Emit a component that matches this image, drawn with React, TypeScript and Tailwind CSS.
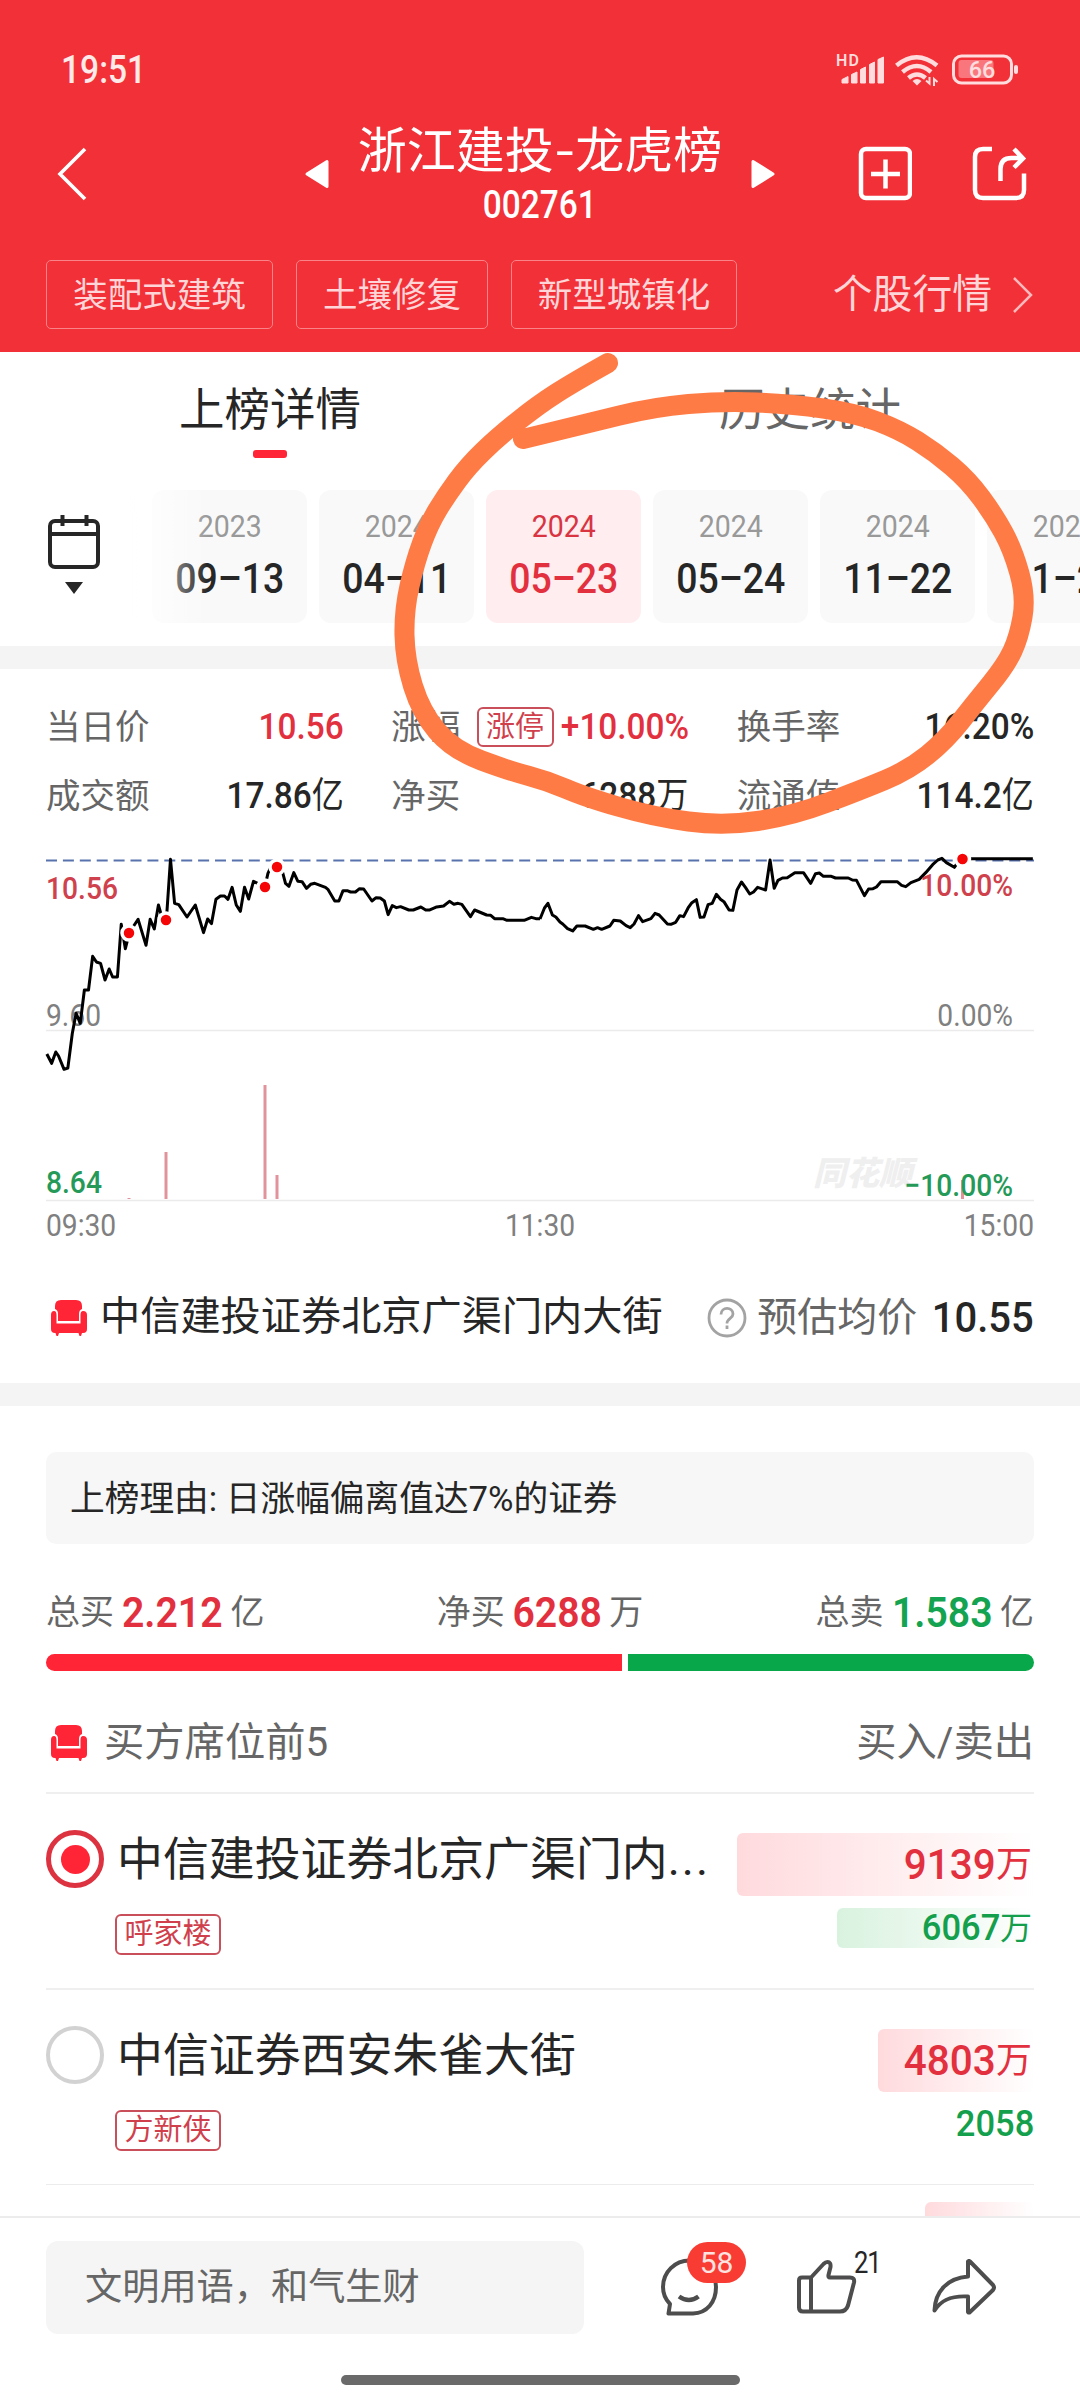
import type { ReactNode } from "react";

type Point = [number, number];

const dates = [
  { year: "2023", day: "09-13" },
  { year: "2024", day: "04-11" },
  { year: "2024", day: "05-23", active: true },
  { year: "2024", day: "05-24" },
  { year: "2024", day: "11-22" },
  { year: "2024", day: "11-25" },
];

// morning session, then afternoon session
const morning =
  "136,642 150,670 162,636 170,648 186,688 197,684 210,580 221,520 233,550 245,450 257,450 269,349 280,366 292,370 305,420 317,387 327,411 341,411 352,253 364,326 375,280 390,255 401,238 424,316 436,238 448,267 460,195 467,220 483,241 495,58 507,190 519,194 543,231 567,195 591,278 603,237 614,251 627,178 640,168 652,168 662,178 674,142 686,195 698,214 710,142 722,177 736,124 748,130 769,141 778,100 786,82 805,82 820,95 829,130 839,139 853,98 865,124 877,125 890,145 902,133 914,130 945,142 952,148 972,183 984,183 996,152 1008,152 1018,156 1032,156 1044,146 1056,147 1080,183 1092,173 1104,174 1116,183 1127,224 1139,197 1151,203 1163,200 1187,210 1200,210 1222,201 1236,210 1248,210 1268,201 1288,198 1305,184 1318,193 1330,190 1341,193 1366,230 1378,210 1413,225 1425,226 1436,236 1460,236 1472,241 1522,241 1543,232 1556,236 1568,236";
const afternoon =
  "0,237 13,204 23,190 36,225 46,231 58,246 66,252 80,266 95,273 107,258 131,258 155,268 167,263 179,268 203,258 214,241 233,243 250,257 262,263 273,252 286,227 298,245 322,236 334,220 346,225 370,252 380,253 394,247 406,227 417,230 430,204 441,188 454,179 465,232 476,231 488,194 500,190 512,163 524,178 534,185 549,210 560,211 572,150 585,126 597,143 609,162 620,156 632,142 655,150 668,60 680,145 691,121 704,114 718,113 740,98 765,98 786,130 800,101 811,99 823,109 846,109 858,114 895,114 907,120 919,121 942,167 954,147 967,146 977,141 990,125 1037,125 1050,136 1062,140 1077,128 1101,118 1120,98 1140,74 1155,60 1167,55 1180,68 1203,82 1215,65 1227,56 1250,56 1431,56";

const trades: Point[] = [[129, 933], [166, 920], [265, 887], [277, 867], [962.5, 859]];
const volumes: Point[] = [[129, 1198], [166, 1152], [265, 1085], [277, 1175], [962.5, 1180]];

const marker: Point[] = [
  [608, 363], [574, 382], [538, 405], [498, 437], [468, 466], [446, 496], [429, 524], [415, 562], [404, 610], [405, 660],
  [421, 712], [453, 750], [510, 771], [548, 781], [585, 797], [654, 817], [723, 826], [792, 816], [861, 790], [909, 770],
  [946, 740], [975, 703], [1006, 665], [1019, 637], [1026, 597], [1013, 550], [994, 515], [968, 480], [935, 452], [900, 430],
  [855, 413], [792, 404], [723, 401], [654, 407], [585, 424], [523, 439],
];

function smooth(points: Point[]) {
  let d = `M${points[0][0]} ${points[0][1]}`;
  for (let i = 1; i < points.length - 1; i++) {
    const [x, y] = points[i];
    const [nx, ny] = points[i + 1];
    d += ` Q${x} ${y} ${(x + nx) / 2} ${(y + ny) / 2}`;
  }
  const last = points[points.length - 1];
  return `${d} L${last[0]} ${last[1]}`;
}

export default function App() {
  return (
    <div className="relative w-[1080px] h-[2400px] overflow-hidden bg-white text-[#262626] leading-none whitespace-nowrap font-['Roboto','Noto_Sans_CJK_SC',sans-serif]">
      <Header />
      <Tabs />
      <DateStrip />
      <div className="h-[23px] bg-[#f4f4f4]" />
      <Stats />
      <Chart />

      {/* Selected seat */}
      <div className="h-[143px] pt-[12px] pl-[49px] pr-[46px] flex items-center">
        <SeatIcon />
        <span className="ml-[11px] text-[40.200px]">中信建投证券北京广渠门内大街</span>
        <svg className="ml-auto" width="40" height="40" viewBox="0 0 40 40" fill="none" stroke="#a3a3a3" strokeWidth="2.8">
          <circle cx="20" cy="20" r="18" />
          <path d="M14 16.5c0-8 12-8 12-.5 0 4.500-6 4.500-6 9.500" />
          <path d="M20 27.500v3.500" />
        </svg>
        <span className="ml-[10px] text-[40px] text-[#666]">预估均价</span>
        <span className="ml-[7px] text-[43px] font-medium origin-right scale-x-[0.93]">10.55</span>
      </div>
      <div className="h-[23px] bg-[#f4f4f4]" />

      {/* Reason and totals */}
      <section className="px-[46px] pt-[46px]">
        <div className="h-[92px] rounded-[10px] bg-[#f7f7f7] px-6 pt-[2px] flex items-center text-[34.700px]">
          上榜理由: 日涨幅偏离值达7%的证券
        </div>
        <div className="h-[110px] pt-[26px] flex items-center justify-between">
          <Total label="总买" value="2.212" unit="亿" color="text-[#e2303f]" />
          <Total label="净买" value="6288" unit="万" color="text-[#e2303f]" />
          <Total label="总卖" value="1.583" unit="亿" color="text-[#14a350]" />
        </div>
        <div className="flex h-[17px] gap-[6px]">
          <div className="w-[576px] rounded-l-full bg-[#ff2436]" />
          <div className="flex-1 rounded-r-full bg-[#08a84a]" />
        </div>
        <div className="h-[121px] pt-[23px] pl-[3px] flex items-center text-[40.300px] text-[#666]">
          <SeatIcon />
          <span className="ml-[15px]">买方席位前5</span>
          <span className="ml-auto">买入/卖出</span>
        </div>
        <Seat name="中信建投证券北京广渠门内" more tag="呼家楼" buy="9139" sell="6067" sellUnit="万" checked buyBar="w-[297px]" sellBar="w-[197px]" />
        <Seat name="中信证券西安朱雀大街" tag="方新侠" buy="4803" sell="2058" buyBar="w-[156px]" />
        <div className="h-8 overflow-hidden border-t border-[#ececec] pt-[17px]">
          <div className="ml-auto h-[63px] w-[109px] rounded-l-md bg-linear-to-r from-[#ffdadd] to-white" />
        </div>
      </section>

      <Footer />

      {/* Hand-drawn circle */}
      <svg className="absolute inset-0 pointer-events-none" width="1080" height="2400" fill="none">
        <path d={smooth(marker)} stroke="#ff7b45" strokeWidth="20" strokeLinecap="round" strokeLinejoin="round" />
      </svg>
    </div>
  );
}

function Header() {
  return (
    <header className="h-[352px] bg-[#f23037] text-white">
      <div className="h-[140px] pl-[61px] pr-[61px] flex items-center justify-between">
        <span className="text-[39px] font-medium text-[#ffeaea] origin-left scale-x-[0.86]">19:51</span>
        <svg width="183" height="34" viewBox="837 53 183 34" fill="#ffdcdd">
          <text x="837" y="66" fontSize="16" fontWeight="600" textLength="23">HD</text>
          <path d="M843 83v-3.500l6-3v6.500zM852.500 83v-8.500l5.500-2.500v11zM861.500 83v-13.500l5-2.500v16zM870.500 83v-18.500l5-2.500v21zM879 83v-23.500l5.500-2.500v26z" stroke="#ffdcdd" strokeWidth="1" strokeLinejoin="round" />
          <g fill="none" stroke="#ffdcdd" strokeWidth="4.500">
            <path d="M897.500 65.500q20-16.500 40.500 0" />
            <path d="M903.500 72q14.500-12 28.500 0" />
            <path d="M909.500 78q8.500-7 17 0" />
          </g>
          <path d="M913.500 81q4.500-4 9 0l-4.500 4.500z" />
          <path d="M927 80.500l3.500 3V77M935 86v-7l3.500 3" fill="none" stroke="#ffdcdd" strokeWidth="2" />
          <rect x="954.500" y="56" width="58" height="27" rx="8" fill="none" stroke="#ffdcdd" strokeWidth="3" />
          <rect x="959.500" y="60" width="35" height="18" rx="3" fill="#f9777c" />
          <rect x="1015" y="65" width="4" height="9" rx="2" />
          <text x="983" y="78" fontSize="23.500" fontWeight="500" textAnchor="middle">66</text>
        </svg>
      </div>

      <div className="h-[120px] px-[54px] flex items-start">
        <svg className="mt-[6px]" width="36" height="56" viewBox="0 0 36 56" fill="none" stroke="white" strokeWidth="3.600">
          <path d="M31 3L6 28l25 25" />
        </svg>
        <svg className="mt-[19px] ml-[214px]" width="26" height="30" viewBox="0 0 26 30" fill="white" stroke="white" strokeWidth="3" strokeLinejoin="round">
          <path d="M23 2.500v25L3 15z" />
        </svg>
        <div className="w-[420px] flex flex-col items-center">
          <h1 className="text-[49px] leading-[60px] -mt-[18px] text-center">
            浙江建投<span className="mx-[4px] inline-block scale-x-[1.3]">-</span>龙虎榜
          </h1>
          <span className="text-[38px] leading-[44px] font-medium mt-[1px] scale-x-[0.88]">002761</span>
        </div>
        <svg className="mt-[19px]" width="26" height="30" viewBox="0 0 26 30" fill="white" stroke="white" strokeWidth="3" strokeLinejoin="round">
          <path d="M3 2.500v25L23 15z" />
        </svg>
        <svg className="mt-[6px] ml-auto" width="56" height="56" viewBox="0 0 56 56" fill="none" stroke="white" strokeWidth="4.500">
          <rect x="5" y="3" width="49" height="49" rx="5" />
          <path d="M29.500 13.500v29M15 28h29" />
        </svg>
        <svg className="mt-[6px] ml-[59px] -mr-px" width="56" height="56" viewBox="0 0 56 56" fill="none" stroke="white" strokeWidth="4.500">
          <path d="M21 3h-9q-8 0-8 8v33q0 8 8 8h33q8 0 8-8V27.500" />
          <path d="M29.500 35V23q0-11 11-11h10M43 3l9 9.500-9 9" />
        </svg>
      </div>

      <div className="h-[69px] px-[46px] flex items-center gap-[23px] text-[#ffd5d7]">
        <Chip width="w-[227px]">装配式建筑</Chip>
        <Chip width="w-[192px]">土壤修复</Chip>
        <Chip width="w-[226px]">新型城镇化</Chip>
        <span className="ml-auto text-[39.800px]">个股行情</span>
        <svg className="-ml-[3px]" width="22" height="38" viewBox="0 0 22 38" fill="none" stroke="#ffb9bc" strokeWidth="2.500">
          <path d="M2 2l17 17L2 36" />
        </svg>
      </div>
    </header>
  );
}

function Chip({ width, children }: { width: string; children: ReactNode }) {
  return (
    <span className={`${width} h-[69px] pt-px border border-[#f98388] rounded-[5px] flex items-center justify-center text-[34.500px]`}>
      {children}
    </span>
  );
}

function Tabs() {
  return (
    <nav className="h-[138px] pt-[29px] flex text-[45.500px] leading-[60px]">
      <div className="w-1/2 flex flex-col items-center">
        <span>上榜详情</span>
        <div className="mt-[9px] h-2 w-[34px] rounded-[3px] bg-[#ff2436]" />
      </div>
      <div className="w-1/2 text-center text-[#666]">历史统计</div>
    </nav>
  );
}

function DateStrip() {
  return (
    <div className="h-[156px] pl-[46px] flex overflow-hidden">
      <div className="w-[57px] pt-[24px] flex flex-col items-center">
        <svg width="56" height="82" viewBox="0 0 56 82" fill="none" stroke="#262626" strokeWidth="4">
          <rect x="4" y="7" width="48" height="46" rx="5" />
          <path d="M4 20h48M16.500 1v11M40.500 1v11" />
          <path d="M19 68h18l-9 12z" fill="#262626" stroke="none" />
        </svg>
      </div>
      <div className="relative ml-[26px] flex shrink-0 gap-3">
        <div className="h-[133px] w-3 rounded-r-[12px] bg-[#fcfcfc]" />
        {dates.map((d, i) => (
          <div
            key={i}
            className={`h-[133px] w-[155px] shrink-0 rounded-[12px] flex flex-col items-center ${
              d.active ? "bg-[#ffedef] text-[#e2303f]" : "bg-[#f9f9f9]"
            }`}
          >
            <span className={`mt-[20px] text-[31px] leading-[34px] scale-x-[0.92] ${d.active ? "text-[#d83442]" : "text-[#999]"}`}>
              {d.year}
            </span>
            <span className="mt-[10px] text-[43px] leading-[48px] font-medium scale-x-[0.87]">{d.day.replace("-", "–")}</span>
          </div>
        ))}
        <div className="absolute left-0 top-0 h-[133px] w-[80px] bg-linear-to-r from-white to-white/0" />
      </div>
    </div>
  );
}

function Stats() {
  return (
    <div className="h-[160px] pt-[23px] px-[46px] grid grid-cols-3 gap-x-[48px]">
      <Stat label="当日价"><span className="text-[#e2303f]">10.56</span></Stat>
      <Stat
        label="涨幅"
        badge={
          <span className="ml-auto mr-[-9px] h-[40px] w-[77px] border-2 border-[#c9505a] rounded-md flex items-center justify-center text-[29px] text-[#d0404c]">
            涨停
          </span>
        }
      >
        <span className="text-[#e2303f]">+10.00%</span>
      </Stat>
      <Stat label="换手率">16.20%</Stat>
      <Stat label="成交额">17.86<Unit /></Stat>
      <Stat label="净买">6288<Unit text="万" /></Stat>
      <Stat label="流通值">114.2<Unit /></Stat>
    </div>
  );
}

function Unit({ text = "亿" }: { text?: string }) {
  return <span className="text-[36px] font-normal">{text}</span>;
}

function Stat({ label, badge, children }: { label: string; badge?: ReactNode; children: ReactNode }) {
  return (
    <div className="h-[69px] pt-px flex items-center justify-between">
      <span className="text-[34.500px] text-[#666]">{label}</span>
      {badge}
      <span className="flex items-center text-[37.500px] font-medium origin-right scale-x-[0.89]">{children}</span>
    </div>
  );
}

function Chart() {
  return (
    <svg className="block overflow-visible" width="1080" height="411" viewBox="0 829 1080 411">
      <text x="813" y="1185" fontSize="33" fontWeight="900" fontStyle="italic" fill="#efefef">同花顺</text>
      <path d="M46 1030.500H1034M46 1200.500H1034" stroke="#ebebeb" strokeWidth="1.500" />
      <path d="M46 860.500H1034" stroke="#5872ae" strokeWidth="1.800" strokeDasharray="11 5.900" />
      <g fontSize="31">
        <Tick x={46} y={1026} color="#808080">9.60</Tick>
        <g fill="none" stroke="black" strokeWidth="3" strokeLinejoin="round">
          <polyline points={morning} transform="translate(0 840) scale(0.3444 0.3333)" vectorEffect="non-scaling-stroke" />
          <polyline points={afternoon} transform="translate(540 840) scale(0.3444 0.3333)" vectorEffect="non-scaling-stroke" />
        </g>
        {volumes.map(([x, y]) => (
          <path key={x} d={`M${x} ${y}V1199`} stroke="#e0939a" strokeWidth="3" />
        ))}
        {trades.map(([x, y]) => (
          <circle key={x} cx={x} cy={y} r="7" fill="#f50505" stroke="white" strokeWidth="3.500" />
        ))}
        <g fontWeight="500">
          <Tick x={46} y={899} color="#cf414c">10.56</Tick>
          <Tick x={46} y={1193} color="#259a58">8.64</Tick>
          <Tick x={1013} y={896} color="#cf414c" anchor="end">10.00%</Tick>
          <Tick x={1013} y={1196} color="#259a58" anchor="end">−10.00%</Tick>
        </g>
        <Tick x={1013} y={1026} color="#808080" anchor="end">0.00%</Tick>
        <Tick x={46} y={1236} color="#808080">09:30</Tick>
        <Tick x={540} y={1236} color="#808080" anchor="middle">11:30</Tick>
        <Tick x={1034} y={1236} color="#808080" anchor="end">15:00</Tick>
      </g>
    </svg>
  );
}

function Tick({ x, y, color, anchor = "start", children }: { x: number; y: number; color: string; anchor?: "start" | "middle" | "end"; children: ReactNode }) {
  return (
    <text transform={`translate(${x} ${y}) scale(0.91 1)`} fill={color} textAnchor={anchor}>
      {children}
    </text>
  );
}

function Total({ label, value, unit, color }: { label: string; value: string; unit: string; color: string }) {
  return (
    <div className="flex items-center text-[34px] text-[#666]">
      {label}
      <span className={`mx-[3px] text-[43px] font-semibold scale-x-[0.91] ${color}`}>{value}</span>
      {unit}
    </div>
  );
}

type SeatProps = {
  name: string;
  more?: boolean;
  tag: string;
  buy: string;
  sell: string;
  sellUnit?: string;
  checked?: boolean;
  buyBar: string;
  sellBar?: string;
};

function Seat({ name, more, tag, buy, sell, sellUnit, checked, buyBar, sellBar }: SeatProps) {
  return (
    <div className="h-[196px] border-t-2 border-[#efefef] flex">
      <div
        className={`mt-[36px] h-[58px] w-[58px] shrink-0 rounded-full flex items-center justify-center ${
          checked ? "border-[5px] border-[#dd3240]" : "border-[4px] border-[#d2d2d2]"
        }`}
      >
        {checked && <div className="h-[29px] w-[29px] rounded-full bg-[#ff2436]" />}
      </div>
      <div className="ml-[11px] pt-[35px]">
        <div className="ml-[2px] text-[45.900px] leading-[60px]">
          {name}{more && <span className="tracking-[2px]">...</span>}
        </div>
        <span className="mt-[25px] h-[41px] w-[106px] border-2 border-[#c9505a] rounded-md flex items-center justify-center text-[29px] text-[#d0404c]">
          {tag}
        </span>
      </div>
      <div className="ml-auto pt-[39px] flex flex-col items-end font-medium">
        <div className={`${buyBar} h-[63px] pr-[2px] rounded-l-md bg-linear-to-r from-[#ffdadd] to-white flex items-center justify-end text-[#e2303f]`}>
          <span className="text-[43px] origin-right scale-x-[0.94]">{buy}</span>
          <span className="text-[36px] font-normal">万</span>
        </div>
        <div
          className={`mt-3 h-10 rounded-l-md flex items-center justify-end text-[#149f4d] ${
            sellBar ? `${sellBar} bg-linear-to-r from-[#d9f2df] to-white pr-[2px]` : ""
          }`}
        >
          <span className="text-[37.500px] origin-right scale-x-[0.92]">{sell}</span>
          {sellUnit && <span className="text-[32px] font-normal">{sellUnit}</span>}
        </div>
      </div>
    </div>
  );
}

function SeatIcon() {
  return (
    <svg width="40" height="38" viewBox="0 0 40 38" fill="#ff2436">
      <path d="M6 10V7q0-6 6-6h15q6 0 6 6v3q-3 1-3 5v7H9v-7q0-4-3-5z" />
      <path d="M2 16q0-4 3-4 2.500 0 2.500 4v8.500h24V16q0-4 2.500-4 4 0 4 4v14q0 4-4 4h-1l-1 3h-1.500l-1-3H10l-1 3H7.500l-1-3H6q-4 0-4-4z" />
    </svg>
  );
}

function Footer() {
  return (
    <footer className="h-[184px] bg-white border-t-2 border-[#ececec]">
      <div className="pt-[23px] pl-[46px] flex items-start">
        <div className="h-[93px] w-[538px] rounded-[12px] bg-[#f5f5f5] pl-[39px] pt-px flex items-center text-[37.200px] text-[#666]">
          文明用语，和气生财
        </div>
        <div className="relative ml-[76px] mt-[17px]">
          <svg width="60" height="60" viewBox="0 0 60 60" fill="none" stroke="#4d4d4d" strokeWidth="4" strokeLinejoin="round">
            <path d="M8.500 55.500h24.500C47 55 56 44 56 29 56 14 44 2.500 29.500 2.500 15 2.500 3 14 3 29c0 7 3 13 7 17z" />
            <path d="M19 38.500q10 7 19.500 0" strokeWidth="4.500" />
          </svg>
          <span className="absolute left-[27px] -top-[16px] h-[41px] w-[59px] rounded-full bg-[#f93c33] flex items-center justify-center text-[30px] text-[#ffe3e1]">
            58
          </span>
        </div>
        <div className="relative ml-[76px] mt-[19px]">
          <svg width="62" height="56" viewBox="0 0 62 56" fill="none" stroke="#4d4d4d" strokeWidth="4" strokeLinejoin="round">
            <path d="M15 17.500H6q-3 0-3 3v27q0 4 4 4h37q6 0 8-6l6-23q1-5-4-5H34q-2 0-1.500-2.500l2-8Q35 2 31.500 2q-2 0-4 2zM15 17.500v34" />
          </svg>
          <span className="absolute left-[58px] -top-[14px] text-[32px] tracking-[-1.5px] leading-[32px] scale-x-[0.8] origin-left">21</span>
        </div>
        <svg className="ml-[73px] mt-[18px]" width="66" height="58" viewBox="0 0 66 58" fill="none" stroke="#4d4d4d" strokeWidth="4" strokeLinejoin="round">
          <path d="M37 2.500v15C16 19 4 33 3.500 51.500 10 41 20 36.500 37 37.500v15.500q1 1 2 0L62 31q2-2.500 0-5L39 2.500q-1-1-2 0z" />
        </svg>
      </div>
      <div className="mx-auto mt-[41px] h-[10px] w-[399px] rounded-full bg-[#6a6a6a]" />
    </footer>
  );
}
